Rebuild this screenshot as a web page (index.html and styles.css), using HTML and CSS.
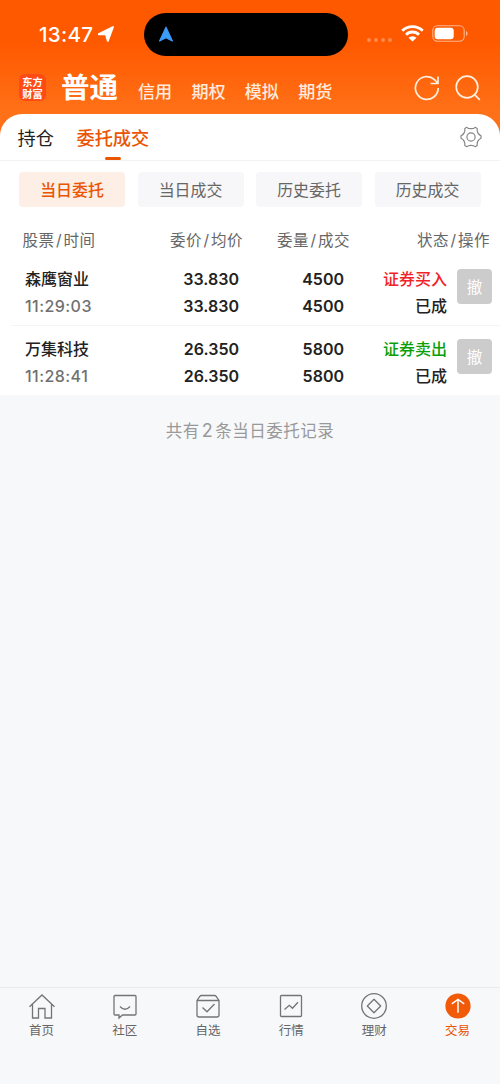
FILE: index.html
```html
<!DOCTYPE html>
<html lang="zh-CN">
<head>
<meta charset="utf-8">
<title>委托成交</title>
<link rel="stylesheet" href="styles.css">
</head>
<body>
<div class="app">
  <header class="top">
    <div class="status">
      <span class="clock">13:47</span>
      <svg class="loc" width="18" height="18" viewBox="0 0 18 18"><path d="M16 2 10.800 15.800 8.800 9.200 1.800 9.200Z" fill="#fff" stroke="#fff" stroke-width="1.900" stroke-linejoin="round"/></svg>
      <div class="island"><svg width="16" height="17" viewBox="0 0 16 17"><path d="M8 1.200 14.400 15 8 11.800 1.600 15Z" fill="#3c9cf8" stroke="#3c9cf8" stroke-width="1.200" stroke-linejoin="round"/></svg></div>
      <div class="dots"><i></i><i></i><i></i><i></i></div>
      <svg class="wifi" width="23" height="17" viewBox="0 0 23 17"><g fill="none" stroke="#fff" stroke-width="2.900"><path d="M1.300 5.800a14.500 14.500 0 0 1 20.400 0"/><path d="M5 9.700a9.200 9.200 0 0 1 13 0"/></g><path d="M11.500 16.600 7.500 12.800a5.700 5.700 0 0 1 8 0Z" fill="#fff"/></svg>
      <svg class="battery" width="37" height="17" viewBox="0 0 37 17"><rect x=".8" y=".8" width="31.400" height="15.400" rx="4.600" fill="none" stroke="#ffb58c" stroke-width="1.100"/><rect x="2.700" y="2.700" width="19" height="11.600" rx="3" fill="#fff"/><path d="M34 6v5c2.100-.9 2.100-4.100 0-5Z" fill="#ffb58c"/></svg>
    </div>
    <nav class="accounts">
      <div class="logo"><span>东方</span><span>财富</span></div>
      <b>普通</b>
      <div class="kinds"><span>信用</span><span>期权</span><span>模拟</span><span>期货</span></div>
      <svg class="refresh" width="26" height="26" viewBox="0 0 26 26" fill="none" stroke="#fff0df" stroke-width="1.700"><path d="M24.200 13A11.400 11.400 0 1 1 20.500 4.600L23.600 8M24 1.500v7h-7.500"/></svg>
      <svg class="search" width="26" height="26" viewBox="0 0 26 26" fill="none" stroke="#fff0df" stroke-width="1.700"><circle cx="12" cy="12" r="10.800"/><path d="m19.800 19.800 5 5"/></svg>
    </nav>
  </header>
  <main class="sheet">
    <div class="tabs">
      <span class="tab">持仓</span><span class="tab on">委托成交</span>
      <svg class="gear" width="22" height="22" viewBox="0 0 22 22" fill="none" stroke="#858585" stroke-width="1.200" stroke-linejoin="round"><path d="M6.800 1.300Q8.200 2.700 11 2.700T15.200 1.300L17.200 2.500Q16.800 4.800 17.900 6.900T21 9.800V12.200Q19 13 17.900 15.100T17.200 19.500L15.200 20.700Q13.800 19.300 11 19.300T6.800 20.700L4.800 19.500Q5.200 17.200 4.100 15.100T1 12.200V9.800Q3 9 4.100 6.900T4.800 2.500Z"/><circle cx="11" cy="11" r="4.100"/></svg>
    </div>
    <div class="filters"><span class="on">当日委托</span><span>当日成交</span><span>历史委托</span><span>历史成交</span></div>
    <div class="heads"><span>股票<i>/</i>时间</span><span>委价<i>/</i>均价</span><span>委量<i>/</i>成交</span><span>状态<i>/</i>操作</span></div>
    <section class="order">
      <div class="name">森鹰窗业<small>11:29:03</small></div>
      <div class="num">33.830<br>33.830</div>
      <div class="num">4500<br>4500</div>
      <div class="state"><span class="buy">证券买入</span><br>已成</div>
      <button class="cancel">撤</button>
    </section>
    <section class="order">
      <div class="name">万集科技<small>11:28:41</small></div>
      <div class="num">26.350<br>26.350</div>
      <div class="num">5800<br>5800</div>
      <div class="state"><span class="sell">证券卖出</span><br>已成</div>
      <button class="cancel">撤</button>
    </section>
  </main>
  <p class="total">共有<span>2</span>条当日委托记录</p>
  <footer class="nav">
    <div><svg width="28" height="28" viewBox="0 0 28 28"><path d="M1.500 13.700 14 2l12.500 11.700M4.500 11.500V25h6v-9.500h6.500V25h6.500V11.500"/></svg>首页</div>
    <div><svg width="28" height="28" viewBox="0 0 28 28"><path d="M4 2.500h20q1 0 1 1V21q0 1-1 1H11.500L8 25v-3H4q-1 0-1-1V3.500q0-1 1-1ZM9 13.500q5 5.500 10 0"/></svg>社区</div>
    <div><svg width="28" height="28" viewBox="0 0 28 28"><path d="M3 7.500h22V22q0 2-2 2H5q-2 0-2-2V7.500L5.800 3.400q.6-.9 1.800-.9h12.800q1.200 0 1.800.9L25 7.500M8.500 14.500l4.500 4.300 7.500-7.800"/></svg>自选</div>
    <div><svg width="28" height="28" viewBox="0 0 28 28"><rect x="3.500" y="2.500" width="21" height="21" rx="1"/><path d="m7.500 16.500 4.800-4.200 3.200 3 5.500-6"/></svg>行情</div>
    <div><svg width="28" height="28" viewBox="0 0 28 28"><circle cx="14" cy="13" r="12.300"/><path d="m14 6.300 6.700 6.700-6.700 6.700-6.700-6.700Z" stroke-linejoin="round"/></svg>理财</div>
    <div class="on"><svg width="28" height="28" viewBox="0 0 28 28"><circle class="disc" cx="14" cy="13" r="12.600"/><path class="arrow" d="M14 19.800V6.800M7.800 10.800 14 6.500l6.200 4.300"/></svg>交易</div>
  </footer>
</div>
</body>
</html>
```

FILE: styles.css
```css
* { box-sizing: border-box; }
body { margin: 0; font-family: Inter, "Noto Sans CJK SC", sans-serif; color: #222; }
svg { display: block; flex: none; }
.app { width: 500px; height: 1084px; display: flex; flex-direction: column; background: #f7f8fa; overflow: hidden; }
.top { height: 136px; flex: none; background: linear-gradient(#ff5900 0 42px, #ff7118 114px); }
.status { height: 68px; display: flex; align-items: center; padding-left: 39px; }
.clock { width: 58px; color: #fff; font-size: 20.500px; font-weight: 500; letter-spacing: .3px; white-space: nowrap; }
.island { width: 204px; height: 43px; border-radius: 22px; background: #000; margin-left: 29px; padding: 13px 14px; }
.dots { display: flex; gap: 3px; margin: 11px 0 0 19px; }
.dots i { width: 4px; height: 4px; border-radius: 50%; background: #ff8a4c; }
.wifi { margin: -2px 0 0 9px; }
.battery { margin: -2px 0 0 8px; }
.accounts { height: 46px; display: flex; align-items: center; color: #ffeadd; }
.logo { width: 27px; height: 27px; margin: -7px 0 0 19px; padding: 2px 0; border-radius: 6px; background: #ff4a16; color: #fff; font: 700 10.200px/11.500px "Noto Sans CJK SC", sans-serif; text-align: center; flex: none; }
.logo span { display: block; white-space: nowrap; }
.accounts b { width: 77px; margin: -7px 0 0 15px; color: #fff; font-size: 28.500px; line-height: 38px; white-space: nowrap; }
.kinds { width: 276px; display: flex; gap: 19.200px; margin-top: 2px; font-size: 17.100px; line-height: 24px; font-weight: 500; white-space: nowrap; }
.refresh, .search { margin-top: -7px; }
.search { margin-left: 15px; }
.sheet { flex: none; height: 281px; margin-top: -22px; background: #fff; border-radius: 22px 22px 0 0; }
.tabs { height: 47px; display: flex; align-items: center; padding: 0 18px 0 17.500px; border-bottom: 1px solid #f2f2f2; font-size: 18.200px; }
.tab { height: 46px; line-height: 49px; }
.tab.on { margin-left: 22.600px; color: #ea5504; font-weight: 500; display: flex; flex-direction: column; align-items: center; }
.tab.on::after { content: ""; width: 16px; height: 3px; flex: none; margin-top: -6px; border-radius: 2px; background: #ea5504; }
.gear { margin-left: auto; }
.filters { display: grid; grid-template-columns: repeat(4, 106px); justify-content: space-between; padding: 11px 19.500px 0 19px; font-size: 15.900px; line-height: 37px; text-align: center; color: #666; }
.filters span { height: 35px; background: #f7f7f9; border-radius: 4px; }
.filters .on { background: #fdeee6; color: #ea5504; font-weight: 500; }
.heads { height: 49px; display: grid; grid-template-columns: 95px 148px 107px 140px; line-height: 67px; font-size: 15.500px; letter-spacing: .5px; color: #666; text-align: right; white-space: nowrap; }
.heads span:first-child { text-align: left; padding-left: 22.500px; }
.heads i { font-style: normal; margin: 0 1.400px; }
.order { height: 70px; display: grid; grid-template-columns: 100px 114px 105px 103px 35px; margin-left: 11px; padding: 9px 0 0 14px; line-height: 27px; font-size: 16px; font-weight: 500; border-top: 1px solid #f5f5f5; }
.order + .order { margin-top: -1px; padding-top: 10px; height: 71px; }
.heads + .order { border-color: transparent; }
.name small { display: block; font-size: 16px; font-weight: 500; letter-spacing: .45px; color: #707070; }
.num { text-align: right; font-weight: 600; }
.state { text-align: right; }
.cancel { width: 35px; height: 35px; margin: 3px 0 0 10px; padding: 0 0 1px; border: 0; border-radius: 4px; background: #ccc; color: #fff; font: 15.500px/28px "Noto Sans CJK SC", sans-serif; }
.buy { color: #f22328; }
.sell { color: #0a9f0a; }
.total { margin: 24px 0 0; height: 24px; line-height: 24px; text-align: center; color: #999; font-size: 16.500px; letter-spacing: .5px; }
.total span { margin: 0 2px; font-size: 18px; }
.nav { height: 97px; margin-top: auto; padding: 5px 0 0; border-top: 1px solid #e9eaed; display: grid; grid-template-columns: repeat(6, 83.200px); font-size: 12.500px; line-height: 19px; color: #666; }
.nav div { display: flex; flex-direction: column; align-items: center; }
.nav svg { fill: none; stroke: #747474; stroke-width: 1.300; }
.nav .on { color: #ea5504; }
.nav .disc { fill: #f05a08; stroke: none; }
.nav .arrow { stroke: #fff; stroke-width: 1.500; }
```
